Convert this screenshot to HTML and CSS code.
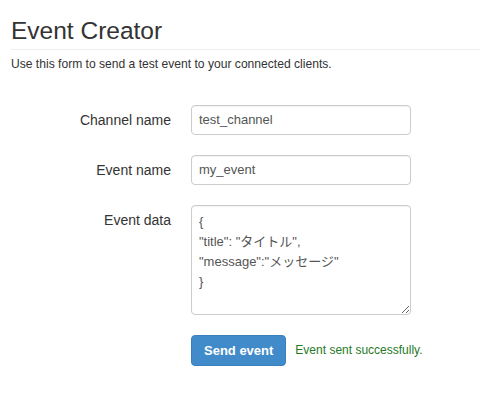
FILE: index.html
```html
<!DOCTYPE html>
<html lang="en">
<head>
<meta charset="utf-8">
<title>Event Creator</title>
<link rel="stylesheet" href="styles.css">
</head>
<body>
<div class="page">
  <h1 class="page-header">Event Creator</h1>
  <p class="intro">Use this form to send a test event to your connected clients.</p>
  <form class="form">
    <div class="row">
      <label class="label" for="channel">Channel name</label>
      <input class="field" id="channel" type="text" value="test_channel">
    </div>
    <div class="row">
      <label class="label" for="event">Event name</label>
      <input class="field" id="event" type="text" value="my_event">
    </div>
    <div class="row">
      <label class="label" for="data">Event data</label>
      <textarea class="field area" id="data">{
"title": "タイトル",
"message":"メッセージ"
}</textarea>
    </div>
    <div class="actions">
      <button class="btn" type="button">Send event</button>
      <span class="success">Event sent successfully.</span>
    </div>
  </form>
</div>
</body>
</html>
```
FILE: styles.css
```css
html, body {
  margin: 0;
  padding: 0;
  background: #fff;
}
body {
  font-family: "Liberation Sans", Arial, "Noto Sans CJK JP", sans-serif;
  color: #333;
}
.page {
  padding-left: 11px;
}
.page-header {
  margin: 18px 0 0;
  padding-bottom: 4px;
  border-bottom: 1px solid #eee;
  font-size: 24.5px;
  font-weight: normal;
  line-height: 1.1;
  color: #333;
}
.intro {
  margin: 6px 0 0;
  font-size: 12.1px;
  line-height: 17px;
}
.form {
  margin-top: 32px;
}
.row {
  display: flex;
  gap: 20px;
  margin-bottom: 20px;
}
.label {
  width: 160px;
  text-align: right;
  font-size: 14px;
  line-height: 30px;
  color: #333;
}
.field {
  box-sizing: border-box;
  width: 220px;
  height: 30px;
  margin: 0;
  padding: 0 7px;
  border: 1px solid #ccc;
  border-radius: 4px;
  font-family: "Liberation Sans", Arial, "Noto Sans CJK JP", sans-serif;
  font-size: 13px;
  color: #555;
  background: #fff;
  box-shadow: inset 0 1px 1px rgba(0,0,0,0.05);
}
.area {
  height: 110px;
  padding: 6px 7px;
  line-height: 20px;
  resize: vertical;
}
.actions {
  display: flex;
  align-items: center;
  margin-left: 180px;
}
.btn {
  box-sizing: border-box;
  height: 31px;
  padding: 0 12px;
  border: 1px solid #3a80bd;
  border-radius: 4px;
  background: #428bca;
  color: #fff;
  font-family: "Liberation Sans", Arial, sans-serif;
  font-size: 13px;
  font-weight: bold;
}
.success {
  margin-left: 9px;
  font-size: 12px;
  color: #1f7a1f;
}
```
